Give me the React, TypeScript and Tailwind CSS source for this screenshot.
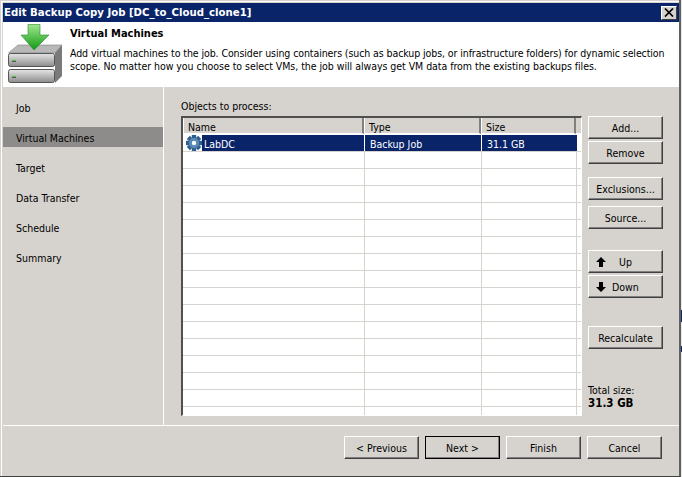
import React from "react";

function Btn({ children, className = "" }: { children: React.ReactNode; className?: string }) {
  return (
    <div className={"h-[23px] w-[75px] pt-[1px] flex items-center justify-center bg-[#d6d3ce] border-t border-l border-t-white border-l-white border-r border-b border-r-[#404040] border-b-[#404040] shadow-[inset_-1px_-1px_0_#808080] text-black " + className}>
      {children}
    </div>
  );
}

function Gear() {
  const teeth = [0, 45, 90, 135];
  return (
    <svg width="16" height="16" viewBox="0 0 16 16" className="shrink-0 bg-white">
      {teeth.map((a) => (
        <rect key={a} x="5.8" y="0" width="4.4" height="16" fill="#2c5f8f" transform={`rotate(${a} 8 8)`} />
      ))}
      <circle cx="8" cy="8" r="5.2" fill="#5a88b4" />
      <circle cx="8" cy="8" r="2.2" fill="#ffffff" />
    </svg>
  );
}

function ServerIcon() {
  return (
    <svg width="55" height="60" viewBox="0 0 55 60" className="block">
      <defs>
        <linearGradient id="sf" x1="0" y1="0" x2="0" y2="1">
          <stop offset="0" stopColor="#e6e6e6" />
          <stop offset="1" stopColor="#8c8c8c" />
        </linearGradient>
        <linearGradient id="ar" x1="0" y1="0" x2="0" y2="1">
          <stop offset="0" stopColor="#9fe68f" />
          <stop offset="1" stopColor="#0f9a12" />
        </linearGradient>
      </defs>
      <polygon points="0.5,29 10,21 54,21 47,29" fill="#b8b8b8" stroke="#808080" strokeWidth="0.6" />
      <polygon points="47,29 54,21 54,52 47,59" fill="#7a7a7a" />
      <rect x="0.5" y="29.5" width="46" height="13" rx="2" fill="url(#sf)" stroke="#555" strokeWidth="1" />
      <rect x="0.5" y="45.5" width="46" height="13" rx="2" fill="url(#sf)" stroke="#555" strokeWidth="1" />
      <rect x="4" y="36" width="4" height="1" fill="#50c040" />
      <rect x="4" y="37" width="4" height="1" fill="#555" />
      <rect x="4" y="52" width="4" height="1" fill="#50c040" />
      <rect x="4" y="53" width="4" height="1" fill="#555" />
      <polygon points="20,0.5 32,0.5 32,11 41,11 26,26 13,11 20,11" fill="url(#ar)" stroke="#2d8a2d" strokeWidth="0.6" />
    </svg>
  );
}

const rows = Array.from({ length: 16 });

export default function App() {
  return (
    <div className="w-[682px] h-[477px] overflow-hidden flex bg-white text-[10.5px] leading-[14px] text-black" style={{ fontFamily: '"DejaVu Sans Condensed", "DejaVu Sans", sans-serif', fontStretch: "condensed" }}>
      <div className="w-[681px] h-[477px] shrink-0 flex flex-col bg-[#d6d3ce] border-b border-b-[#404040] border-r-2 border-r-[#606060] pt-[3px] pl-[3px] shadow-[inset_1px_1px_0_#d6d3ce,inset_2px_2px_0_#ffffff]">
        <div className="h-[19px] shrink-0 bg-[#0a246a] flex items-center justify-between pl-[1px] pr-[2px]">
          <span className="text-white font-bold text-[11.3px]">Edit Backup Copy Job [DC_to_Cloud_clone1]</span>
          <div className="w-[16px] h-[14px] bg-[#d6d3ce] border-t border-l border-t-white border-l-white border-r border-b border-r-[#404040] border-b-[#404040] flex items-center justify-center">
            <svg width="10" height="9" viewBox="0 0 10 9"><path d="M1 0.5 L9 8.5 M9 0.5 L1 8.5" stroke="#000" strokeWidth="1.7" /></svg>
          </div>
        </div>
        <div className="h-[65px] shrink-0 bg-white flex">
          <div className="w-[67px] pl-[5px] pt-[2px] shrink-0"><ServerIcon /></div>
          <div className="pt-[4px]">
            <div className="font-bold text-[11px] h-[16px] flex items-center">Virtual Machines</div>
            <div className="mt-[5px] leading-[13px] whitespace-nowrap">
              <div className="tracking-[-0.09px]">Add virtual machines to the job. Consider using containers (such as backup jobs, or infrastructure folders) for dynamic selection</div>
              <div className="tracking-[-0.04px]">scope. No matter how you choose to select VMs, the job will always get VM data from the existing backups files.</div>
            </div>
          </div>
        </div>
        <div className="flex h-[339px] shrink-0 border-b border-b-white">
          <div className="w-[161px] shrink-0 border-r border-r-white pt-[10px] flex flex-col gap-[10px]">
            {["Job", "Virtual Machines", "Target", "Data Transfer", "Schedule", "Summary"].map((s) => (
              <div key={s} className={"h-[20px] pt-[2px] flex items-center pl-[13px] " + (s === "Virtual Machines" ? "bg-[#8e8c8a]" : "")}>{s}</div>
            ))}
          </div>
          <div className="flex-1 flex pl-[17px] pt-[11px]">
            <div className="w-[401px] shrink-0">
              <div className="h-[18px] pt-[1px]">Objects to process:</div>
              <div className="h-[300px] w-[401px] bg-white border-t-2 border-l-2 border-t-[#505050] border-l-[#505050] border-r border-b border-r-white border-b-white overflow-hidden">
                <div className="flex h-[16px] bg-[#d6d3ce]">
                  {[{ t: "Name", w: "w-[181px]" }, { t: "Type", w: "w-[117px]" }, { t: "Size", w: "w-[95px]" }].map((c) => (
                    <div key={c.t} className={c.w + " border-r-2 border-r-[#808080] border-b border-b-white pl-[5px] pt-[2px] flex items-center shadow-[inset_1px_0_0_#fff]"}>{c.t}</div>
                  ))}
                  <div className="flex-1 border-b border-b-white" />
                </div>
                <div className="flex h-[16px] mt-[1px]">
                  <div className="w-[182px] flex items-center pl-[3px] border-r border-r-white">
                    <Gear />
                    <span className="bg-[#0a246a] text-white flex-1 h-full flex items-center pl-[2px] pt-[2px]">LabDC</span>
                  </div>
                  <div className="w-[117px] bg-[#0a246a] text-white flex items-center pl-[5px] pt-[2px] border-r border-r-white">Backup Job</div>
                  <div className="w-[95px] bg-[#0a246a] text-white flex items-center pl-[5px] pt-[2px]">31.1 GB</div>
                </div>
                {rows.map((_, i) => (
                  <div key={i} className="flex h-[17px] border-t border-t-[#d6d3ce]">
                    <div className="w-[182px] border-r border-r-[#d6d3ce]" />
                    <div className="w-[117px] border-r border-r-[#d6d3ce]" />
                    <div className="w-[95px] border-r border-r-[#d6d3ce]" />
                  </div>
                ))}
              </div>
            </div>
            <div className="ml-[6px] pt-[18px] w-[75px] shrink-0">
              <Btn>Add...</Btn>
              <Btn className="mt-[2px]">Remove</Btn>
              <Btn className="mt-[13px]">Exclusions...</Btn>
              <Btn className="mt-[6px]">Source...</Btn>
              <Btn className="mt-[21px]">
                <span className="flex items-center w-full pl-[6px]">
                  <svg width="12" height="10" viewBox="0 0 12 10"><path d="M6 0 L11 5 H8 V10 H4 V5 H1 Z" fill="#000" /></svg>
                  <span className="ml-[12px]">Up</span>
                </span>
              </Btn>
              <Btn className="mt-[2px]">
                <span className="flex items-center w-full pl-[6px]">
                  <svg width="12" height="10" viewBox="0 0 12 10"><path d="M6 10 L11 5 H8 V0 H4 V5 H1 Z" fill="#000" /></svg>
                  <span className="ml-[5px]">Down</span>
                </span>
              </Btn>
              <Btn className="mt-[28px]">Recalculate</Btn>
              <div className="mt-[35px] leading-[13px]">
                <div>Total size:</div>
                <div className="font-bold text-[11.5px]">31.3 GB</div>
              </div>
            </div>
          </div>
        </div>
        <div className="flex-1 flex justify-end items-start pt-[10px] pr-[17px] gap-[6px]">
          <Btn>&lt; Previous</Btn>
          <Btn className="outline outline-1 outline-offset-[-1px] outline-black">Next &gt;</Btn>
          <Btn>Finish</Btn>
          <Btn>Cancel</Btn>
        </div>
      </div>
      <div className="flex-1 flex flex-col bg-[#e8e8e8]">
        <div className="h-[310px]" />
        <div className="h-[12px] bg-[#0a246a]" />
        <div className="h-[24px]" />
        <div className="h-[6px] bg-[#0a246a]" />
      </div>
    </div>
  );
}
